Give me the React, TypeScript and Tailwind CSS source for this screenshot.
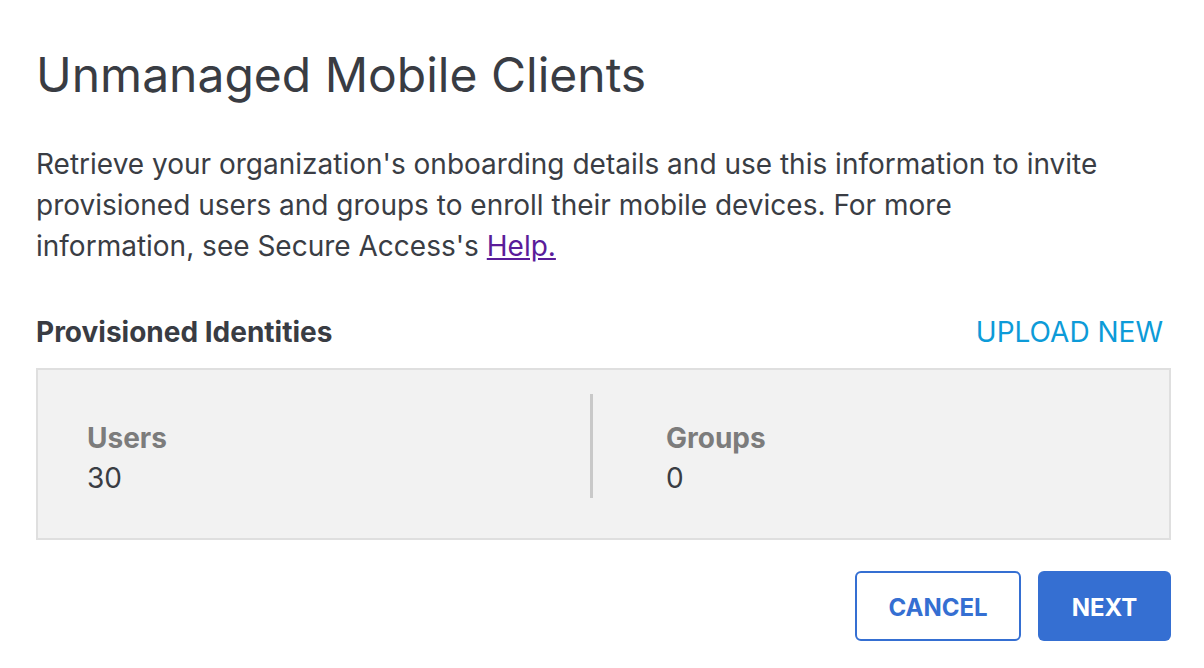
import React from 'react'

const App = () => {
  return (
    <div
      className="w-[1204px] h-[668px] bg-white text-[#3a3d44] pl-9 pr-[33px] pt-[39px]"
      style={{ fontFamily: 'Inter, "Noto Sans", sans-serif' }}
    >
      <h1 className="text-[48px] leading-[72px] font-normal text-[#393c43]">
        Unmanaged Mobile Clients
      </h1>

      <p className="mt-[33px] text-[28px] leading-[41px] max-w-[1075px]">
        Retrieve your organization's onboarding details and use this information to invite
        provisioned users and groups to enroll their mobile devices. For more information, see
        Secure Access's{' '}
        <a href="#" className="text-[#5a1c9a] underline">
          Help.
        </a>
      </p>

      <div className="mt-[48px] h-[34px] flex items-center justify-between">
        <h2 className="text-[28px] font-bold text-[#393c43]">Provisioned Identities</h2>
        <button className="text-[28px] text-[#0d9bd8] mr-[8px]">UPLOAD NEW</button>
      </div>

      <div className="mt-[19px] h-[172px] border-2 border-[#dfdfdf] bg-[#f2f2f2] flex items-center">
        <div className="flex-1 pl-[49px] pt-2 text-[28px] leading-[40px]">
          <div className="font-bold text-[#7c7c7c]">Users</div>
          <div className="text-[#3a3d44]">30</div>
        </div>
        <div className="w-[3px] h-[104px] mb-[16px] bg-[#c9c9c9]" />
        <div className="flex-1 pl-[73px] pt-2 text-[28px] leading-[40px]">
          <div className="font-bold text-[#7c7c7c]">Groups</div>
          <div className="text-[#3a3d44]">0</div>
        </div>
      </div>

      <div className="mt-[31px] flex justify-end gap-[17px]">
        <button className="w-[166px] h-[70px] pt-1 rounded-[6px] border-2 border-[#356fd2] text-[#356fd2] text-[24px] font-bold">
          CANCEL
        </button>
        <button className="w-[133px] h-[70px] pt-1 rounded-[6px] bg-[#356fd2] text-white text-[24px] font-bold">
          NEXT
        </button>
      </div>
    </div>
  )
}

export default App
